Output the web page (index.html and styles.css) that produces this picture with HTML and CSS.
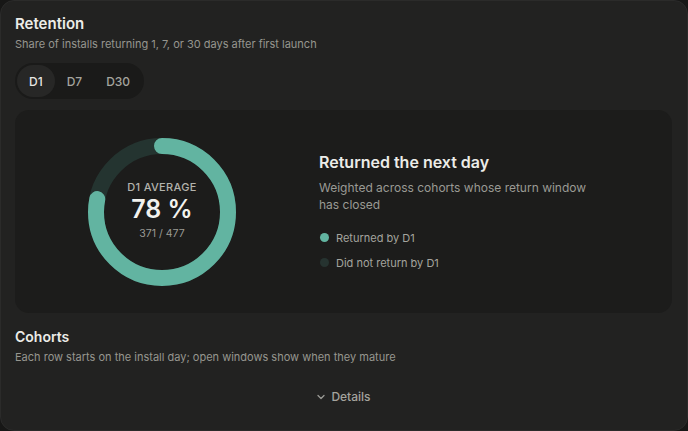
FILE: index.html
```html
<!DOCTYPE html>
<html>
<head>
  <title>Retention</title>
  <link rel="stylesheet" href="styles.css">
</head>
<body>

<div class="card">
  <h2 class="title">Retention</h2>
  <p class="sub">Share of installs returning 1, 7, or 30 days after first launch</p>

  <div class="tabs">
    <button class="tab active">D1</button>
    <button class="tab">D7</button>
    <button class="tab">D30</button>
  </div>

  <div class="panel">
    <div class="donut">
      <svg width="148" height="148" viewBox="0 0 148 148">
        <circle cx="74" cy="74" r="66" fill="none" stroke="#243430" stroke-width="16"/>
        <circle cx="74" cy="74" r="66" fill="none" stroke="#62b4a1" stroke-width="16"
                stroke-linecap="round" stroke-dasharray="323.5 1000"
                transform="rotate(-90 74 74)"/>
      </svg>
      <div class="donut-text">
        <div class="label">D1 AVERAGE</div>
        <div class="value">78 %</div>
        <div class="count">371 / 477</div>
      </div>
    </div>

    <div class="info">
      <h3 class="info-title">Returned the next day</h3>
      <p class="info-desc">Weighted across cohorts whose return window has closed</p>
      <ul class="legend">
        <li><span class="dot on"></span>Returned by D1</li>
        <li><span class="dot off"></span>Did not return by D1</li>
      </ul>
    </div>
  </div>

  <h2 class="title cohorts">Cohorts</h2>
  <p class="sub">Each row starts on the install day; open windows show when they mature</p>

  <div class="details">
    <svg width="10" height="10" viewBox="0 0 10 10"><path d="M2 3.5 L5 6.5 L8 3.5" fill="none" stroke="#9a9a95" stroke-width="1.3" stroke-linecap="round" stroke-linejoin="round"/></svg>
    <span>Details</span>
  </div>
</div>

</body>
</html>
```

FILE: styles.css
```css
html, body {
  margin: 0;
  height: 100%;
  background: #171716;
}

body {
  font-family: "Inter", "Noto Sans", sans-serif;
  color: #e8e8e4;
}

.card {
  box-sizing: border-box;
  height: 431px;
  background: #222221;
  border: 1px solid #2b2b2a;
  border-radius: 14px;
  padding: 13px 15px 0 14px;
  overflow: hidden;
}

.title {
  margin: 0;
  font-size: 15px;
  line-height: 20px;
  font-weight: 600;
  color: #ecece8;
}

.sub {
  margin: 3px 0 0;
  font-size: 11px;
  line-height: 15px;
  color: #96968f;
}

.tabs {
  display: inline-flex;
  margin-top: 11px;
  padding: 2px;
  background: #1a1a19;
  border-radius: 18px;
}

.tab {
  border: none;
  background: none;
  font-family: inherit;
  font-size: 12px;
  font-weight: 500;
  color: #a4a49e;
  height: 32px;
  padding: 0 12px;
  border-radius: 16px;
}

.tab.active {
  background: #272726;
  color: #e6e6e2;
}

.panel {
  display: flex;
  align-items: center;
  height: 203px;
  margin-top: 11px;
  background: #1c1c1b;
  border-radius: 14px;
  padding-left: 73px;
}

.donut {
  position: relative;
  width: 148px;
  height: 148px;
}

.donut svg {
  display: block;
}

.donut-text {
  position: absolute;
  inset: 0;
  display: flex;
  flex-direction: column;
  align-items: center;
  justify-content: center;
  padding-bottom: 4px;
}

.label {
  font-size: 11px;
  letter-spacing: 0.3px;
  color: #b3b3ad;
  font-weight: 500;
}

.value {
  font-size: 25px;
  font-weight: 600;
  color: #f2f2ee;
  line-height: 30px;
}

.count {
  margin-top: 3px;
  font-size: 10.5px;
  color: #9a9a94;
}

.info {
  margin-left: 83px;
  margin-top: 8px;
  width: 290px;
}

.info-title {
  margin: 0;
  font-size: 16px;
  font-weight: 600;
  line-height: 20px;
  color: #ececE8;
}

.info-desc {
  margin: 7px 0 0;
  font-size: 12px;
  line-height: 17px;
  color: #9a9a94;
}

.legend {
  list-style: none;
  margin: 17px 0 0;
  padding: 0;
}

.legend li {
  display: flex;
  align-items: center;
  gap: 7px;
  font-size: 11px;
  line-height: 16px;
  color: #a4a49e;
  margin-bottom: 9px;
}

.dot {
  width: 9px;
  height: 9px;
  border-radius: 50%;
  margin-left: 1px;
}

.dot.on { background: #62b4a1; }
.dot.off { background: #263330; }

.cohorts {
  margin-top: 14px;
  font-size: 14px;
}

.details {
  display: flex;
  justify-content: center;
  align-items: center;
  gap: 5px;
  margin-top: 24px;
  font-size: 12px;
  font-weight: 500;
  color: #a4a49e;
}
```
